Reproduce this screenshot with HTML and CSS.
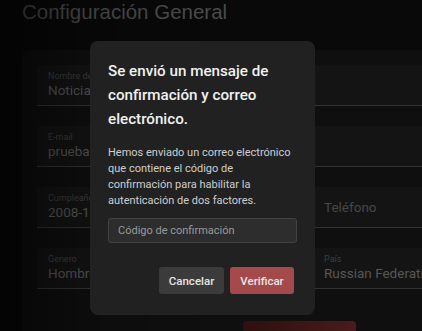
FILE: index.html
```html
<!DOCTYPE html>
<html lang="es">
<head>
<meta charset="utf-8">
<title>Configuración General</title>
<link rel="stylesheet" href="styles.css">
</head>
<body>
<main class="page">
  <h1 class="page-title">Configuración General</h1>
  <section class="card">
    <div class="grid">
      <div class="field field-wide"><span class="label">Nombre de usuario</span><span class="value">Noticias</span></div>
      <div class="field field-wide"><span class="label">E-mail</span><span class="value">prueba@correo.com</span></div>
      <div class="field"><span class="label">Cumpleaños</span><span class="value">2008-12-01</span></div>
      <div class="field field-empty"><span class="value">Teléfono</span></div>
      <div class="field"><span class="label">Genero</span><span class="value">Hombre</span></div>
      <div class="field"><span class="label">País</span><span class="value">Russian Federation</span></div>
    </div>
    <div class="actions">
      <button class="save">Guardar</button>
    </div>
  </section>
</main>
<div class="overlay"></div>
<div class="dialog" role="dialog">
  <h2 class="dialog-title">Se envió un mensaje de confirmación y correo electrónico.</h2>
  <p class="dialog-text">Hemos enviado un correo electrónico que contiene el código de confirmación para habilitar la autenticación de dos factores.</p>
  <input class="code-input" type="text" placeholder="Código de confirmación">
  <div class="dialog-actions">
    <button class="btn btn-cancel">Cancelar</button>
    <button class="btn btn-verify">Verificar</button>
  </div>
</div>
</body>
</html>
```
FILE: styles.css
```css
html, body {
  margin: 0;
  padding: 0;
  background: #090909;
  overflow: hidden;
  height: 100%;
}
body {
  font-family: Roboto, "Liberation Sans", sans-serif;
}
.page {
  padding: 0 0 0 22px;
  width: 640px;
}
.page-title {
  margin: 0;
  font-family: "Liberation Sans", Arial, sans-serif;
  font-weight: 400;
  font-size: 20.5px;
  line-height: 24px;
  color: #4b4b4b;
}
.card {
  margin-top: 26px;
  background: #0f0f0f;
  border-radius: 8px;
  padding: 15px 15px 20px;
}
.grid {
  display: grid;
  grid-template-columns: 256px 256px;
  column-gap: 20px;
  row-gap: 20px;
}
.field {
  height: 40px;
  background: #141414;
  border-bottom: 1px solid #333;
  border-radius: 4px 4px 0 0;
  display: flex;
  flex-direction: column;
  justify-content: center;
  padding: 0 11px;
}
.field-wide {
  grid-column: 1 / 3;
}
.label {
  font-size: 9px;
  line-height: 11px;
  color: #3f3f3f;
}
.value {
  font-size: 13.5px;
  line-height: 17px;
  color: #575757;
  white-space: nowrap;
}
.field-empty .value {
  color: #474747;
}
.actions {
  display: flex;
  padding-left: 206px;
  margin-top: 32px;
}
.save {
  width: 113px;
  height: 34px;
  border: 0;
  border-radius: 4px;
  background: linear-gradient(to right, #2c1010, #4a1b1b);
  color: #5a3a3a;
  font-family: Roboto, sans-serif;
}
.overlay {
  position: fixed;
  inset: 0;
  background: linear-gradient(to right, rgba(0,0,0,0.55) 0, rgba(0,0,0,0.15) 90px, rgba(0,0,0,0) 200px);
  pointer-events: none;
}
.dialog {
  position: absolute;
  left: 90px;
  top: 41px;
  width: 225px;
  box-sizing: border-box;
  padding: 18px 18px 21px;
  background: #212121;
  border-radius: 8px;
  color: #eee;
}
.dialog-title {
  margin: 0;
  font-size: 15.2px;
  font-weight: 500;
  line-height: 24px;
  color: #f1f1f1;
}
.dialog-text {
  margin: 14px 0 0;
  font-size: 11px;
  line-height: 16px;
  color: #cfcfcf;
}
.code-input {
  display: block;
  margin-top: 9px;
  width: 100%;
  height: 25px;
  box-sizing: border-box;
  background: #2d2d2d;
  border: 1px solid #424242;
  border-radius: 3px;
  padding: 0 9px;
  font-family: Roboto, sans-serif;
  font-size: 11px;
  color: #ddd;
  outline: none;
}
.code-input::placeholder {
  color: #9a9a9a;
}
.dialog-actions {
  display: flex;
  justify-content: flex-end;
  gap: 6px;
  margin-top: 24px;
  padding-right: 3px;
}
.btn {
  height: 27px;
  border: 0;
  border-radius: 3px;
  font-family: Roboto, sans-serif;
  font-size: 11.5px;
  font-weight: 500;
  color: #e6e6e6;
  padding: 0;
}
.btn-cancel {
  width: 65px;
  background: #3b3b3b;
}
.btn-verify {
  width: 64px;
  background: #a54a4c;
}
```
